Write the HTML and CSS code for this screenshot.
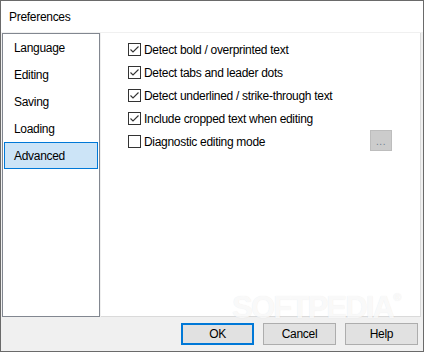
FILE: index.html
```html
<!DOCTYPE html>
<html>
<head>
<meta charset="utf-8">
<link rel="stylesheet" href="styles.css">
</head>
<body>
<div class="window">
  <div class="titlebar">Preferences</div>
  <div class="body">
    <div class="content">
      <ul class="nav">
        <li class="item">Language</li>
        <li class="item">Editing</li>
        <li class="item">Saving</li>
        <li class="item">Loading</li>
        <li class="item selected">Advanced</li>
      </ul>
      <div class="panel">
        <div class="row"><span class="cb"><svg viewBox="0 0 11 11" width="11" height="11"><path d="M1.5 5.5 L4 8 L9.5 2.5" fill="none" stroke="#333" stroke-width="1.1"/></svg></span><span class="label">Detect bold / overprinted text</span></div>
        <div class="row"><span class="cb"><svg viewBox="0 0 11 11" width="11" height="11"><path d="M1.5 5.5 L4 8 L9.5 2.5" fill="none" stroke="#333" stroke-width="1.1"/></svg></span><span class="label">Detect tabs and leader dots</span></div>
        <div class="row"><span class="cb"><svg viewBox="0 0 11 11" width="11" height="11"><path d="M1.5 5.5 L4 8 L9.5 2.5" fill="none" stroke="#333" stroke-width="1.1"/></svg></span><span class="label">Detect underlined / strike-through text</span></div>
        <div class="row"><span class="cb"><svg viewBox="0 0 11 11" width="11" height="11"><path d="M1.5 5.5 L4 8 L9.5 2.5" fill="none" stroke="#333" stroke-width="1.1"/></svg></span><span class="label">Include cropped text when editing</span></div>
        <div class="row"><span class="cb"></span><span class="label">Diagnostic editing mode</span><span class="more">...</span></div>
      </div>
    </div>
    <div class="buttons">
      <div class="btn default">OK</div>
      <div class="btn">Cancel</div>
      <div class="btn">Help</div>
    </div>
  </div>
  <div class="watermark">SOFTPEDIA<span class="reg">®</span></div>
</div>
</body>
</html>
```
FILE: styles.css
```css
html, body {
  margin: 0;
  padding: 0;
  background: #f0f0f0;
}
body {
  font-family: "Liberation Sans", Arial, sans-serif;
  font-size: 12px;
  letter-spacing: -0.3px;
  color: #000;
}
.window {
  position: relative;
  width: 424px;
  height: 352px;
  box-sizing: border-box;
  border: 1px solid #6a6a6a;
  display: flex;
  flex-direction: column;
  overflow: hidden;
}
.titlebar {
  height: 31px;
  flex: none;
  background: #fff;
  display: flex;
  align-items: center;
  padding-left: 8px;
}
.body {
  flex: 1;
  background: #f0f0f0;
  padding: 1px 2px 0 1px;
  display: flex;
  flex-direction: column;
}
.content {
  display: flex;
  gap: 1px;
  height: 284px;
  flex: none;
}
.nav {
  list-style: none;
  margin: 0;
  padding: 0 1px;
  width: 98px;
  box-sizing: border-box;
  border: 1px solid #828790;
  background: #fff;
}
.item {
  height: 27px;
  box-sizing: border-box;
  border: 1px solid transparent;
  padding-left: 9px;
  display: flex;
  align-items: center;
}
.item.selected {
  background: #cce4f7;
  border-color: #0078d7;
}
.panel {
  flex: 1;
  background: #fff;
  border-right: 1px solid #dadada;
  border-bottom: 1px solid #dadada;
  padding: 5px 0 0 27px;
  box-sizing: border-box;
}
.row {
  height: 23px;
  display: flex;
  align-items: center;
}
.cb {
  width: 13px;
  height: 13px;
  box-sizing: border-box;
  border: 1px solid #333;
  margin-right: 3px;
  display: flex;
  flex: none;
}
.cb svg {
  display: block;
}
.more {
  margin-left: auto;
  margin-right: 28px;
  margin-bottom: 3px;
  width: 22px;
  height: 21px;
  box-sizing: border-box;
  background: #cccccc;
  border: 1px solid #bdbdbd;
  color: #6f7f8f;
  font-size: 10px;
  display: flex;
  align-items: center;
  justify-content: center;
  letter-spacing: 0.5px;
  padding-top: 2px;
}
.buttons {
  flex: 1;
  display: flex;
  justify-content: flex-end;
  gap: 9px;
  padding: 6px 3px 0 0;
  align-items: flex-start;
}
.btn {
  width: 73px;
  height: 22px;
  box-sizing: border-box;
  background: #e1e1e1;
  border: 1px solid #adadad;
  display: flex;
  align-items: center;
  justify-content: center;
}
.btn.default {
  border: 2px solid #0078d7;
}
.watermark {
  position: absolute;
  left: 231px;
  top: 291px;
  font-family: "Liberation Sans", Arial, sans-serif;
  font-weight: bold;
  font-size: 31px;
  line-height: 31px;
  letter-spacing: -1.8px;
  color: rgba(255, 255, 255, 0.8);
  text-shadow: 0 0 1px rgba(0, 0, 0, 0.1);
  pointer-events: none;
}
.watermark .reg {
  font-size: 11px;
  line-height: 11px;
  vertical-align: top;
  letter-spacing: 0;
}
```
